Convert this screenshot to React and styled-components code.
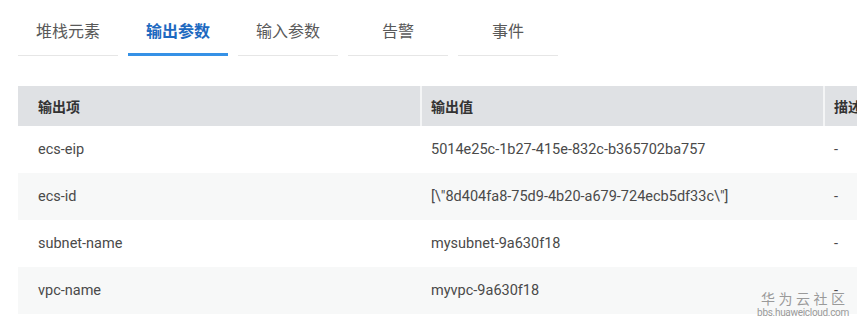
import React, { useState } from "react";
import styled, { createGlobalStyle } from "styled-components";

const GlobalStyle = createGlobalStyle`
  html, body {
    margin: 0;
    padding: 0;
    background: #ffffff;
    overflow: hidden;
  }
  body {
    font-family: Roboto, "Noto Sans CJK SC", sans-serif;
  }
`;

const tabs = ["堆栈元素", "输出参数", "输入参数", "告警", "事件"];

const rows = [
  { name: "ecs-eip", value: "5014e25c-1b27-415e-832c-b365702ba757", desc: "-" },
  { name: "ecs-id", value: '[\\"8d404fa8-75d9-4b20-a679-724ecb5df33c\\"]', desc: "-" },
  { name: "subnet-name", value: "mysubnet-9a630f18", desc: "-" },
  { name: "vpc-name", value: "myvpc-9a630f18", desc: "-" },
];

const App = () => {
  const [active, setActive] = useState(1);
  return (
    <Page>
      <GlobalStyle />
      <TabBar>
        {tabs.map((t, i) => (
          <Tab key={t} $active={i === active} onClick={() => setActive(i)}>
            {t}
          </Tab>
        ))}
      </TabBar>
      <Table>
        <HeadRow>
          <HeadCell $first>输出项</HeadCell>
          <HeadCell>输出值</HeadCell>
          <HeadCell>描述</HeadCell>
        </HeadRow>
        {rows.map((r, i) => (
          <Row key={r.name} $striped={i % 2 === 1}>
            <Cell $first>{r.name}</Cell>
            <Cell>{r.value}</Cell>
            <Cell>{r.desc}</Cell>
          </Row>
        ))}
      </Table>
      <Watermark>
        <div className="cn">华为云社区</div>
        <div className="en">bbs.huaweicloud.com</div>
      </Watermark>
    </Page>
  );
};

export default App;

const Page = styled.div`
  position: relative;
  width: 857px;
  height: 327px;
  overflow: hidden;
  padding-left: 18px;
  box-sizing: border-box;
`;

const TabBar = styled.div`
  display: flex;
  gap: 10px;
  padding-top: 19px;
  margin-bottom: 28px;
`;

const Tab = styled.div`
  width: 100px;
  height: 37px;
  box-sizing: border-box;
  display: flex;
  justify-content: center;
  align-items: flex-start;
  padding-top: 3px;
  font-size: 16px;
  line-height: 20px;
  cursor: pointer;
  color: ${(p) => (p.$active ? "#1d69c0" : "#595959")};
  font-weight: ${(p) => (p.$active ? "bold" : "normal")};
  border-bottom: ${(p) => (p.$active ? "3px solid #3591e6" : "1px solid #e6e6e6")};
  margin-bottom: ${(p) => (p.$active ? "0" : "2px")};
`;

const Table = styled.div`
  width: 1000px;
  display: flex;
  flex-direction: column;
`;

const grid = `
  display: grid;
  grid-template-columns: 402px 403px 1fr;
`;

const HeadRow = styled.div`
  ${grid}
  height: 40px;
  background: #dfe1e4;
`;

const HeadCell = styled.div`
  display: flex;
  align-items: center;
  padding-left: ${(p) => (p.$first ? "20px" : "9px")};
  border-left: ${(p) => (p.$first ? "none" : "2px solid #f4f5f6")};
  font-size: 14px;
  font-weight: bold;
  color: #333333;
`;

const Row = styled.div`
  ${grid}
  height: 47px;
  background: ${(p) => (p.$striped ? "#f7f8f8" : "#ffffff")};
`;

const Cell = styled.div`
  display: flex;
  align-items: center;
  padding-left: ${(p) => (p.$first ? "20px" : "11px")};
  font-size: 14.5px;
  color: #4a4a4a;
  white-space: nowrap;
`;

const Watermark = styled.div`
  position: absolute;
  right: 8px;
  bottom: 8px;
  display: flex;
  flex-direction: column;
  align-items: center;
  color: #9a9a9a;
  pointer-events: none;

  .cn {
    font-size: 14px;
    line-height: 16px;
    letter-spacing: 3.5px;
    margin-right: -3.5px;
  }

  .en {
    font-size: 10px;
    line-height: 12px;
    letter-spacing: -0.3px;
  }
`;
